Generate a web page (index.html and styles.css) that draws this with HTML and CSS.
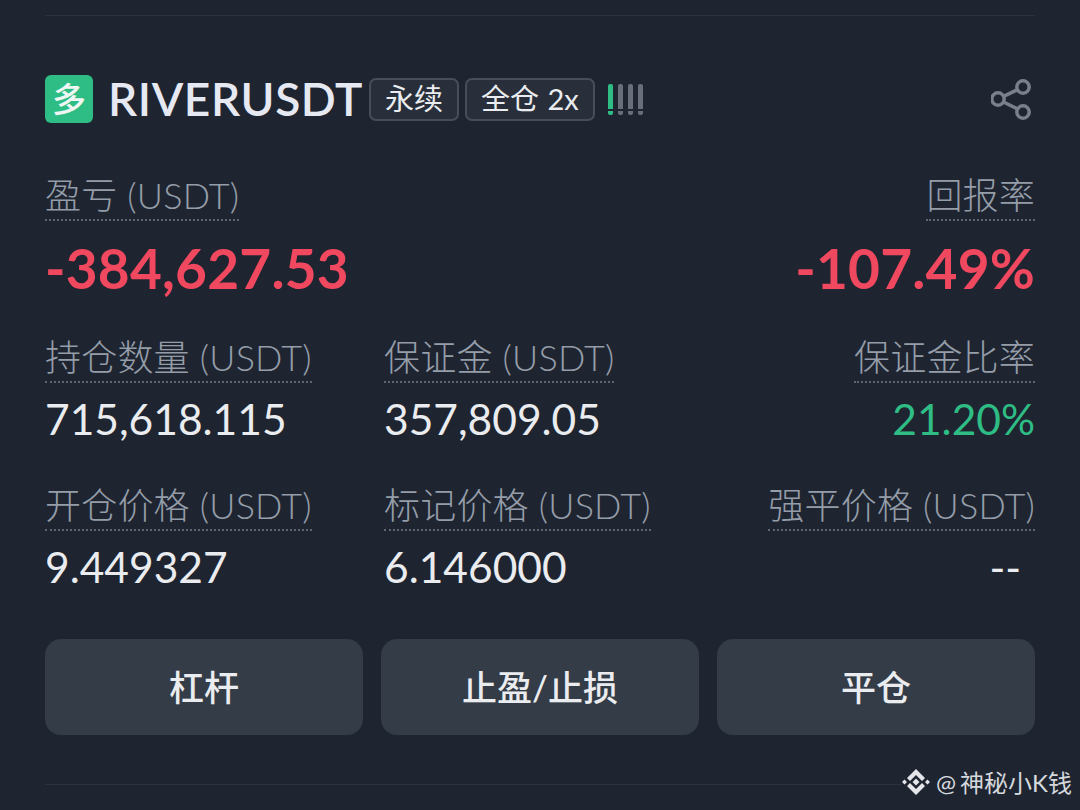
FILE: index.html
```html
<!DOCTYPE html>
<html lang="zh-CN">
<head>
<meta charset="utf-8">
<title>RIVERUSDT</title>
<link rel="stylesheet" href="styles.css">
</head>
<body>
<main class="card">
  <header class="head">
    <span class="side">多</span>
    <span class="symbol">RIVERUSDT</span>
    <span class="tag">永续</span>
    <span class="tag">全仓 2x</span>
    <span class="risk"><i class="on"></i><i></i><i></i><i></i></span>
    <svg class="share" viewBox="0 0 40 44" width="40" height="44" fill="none" stroke="#79808c" stroke-width="3.500">
      <circle cx="7" cy="22" r="6.200"/><circle cx="32" cy="10" r="6.200"/><circle cx="32" cy="35" r="6.200"/>
      <path d="M12.500 19.300 26.500 12.700M12.500 25 26.500 32"/>
    </svg>
  </header>

  <section class="pnl">
    <div class="cell">
      <span class="label">盈亏 (USDT)</span>
      <span class="big red">-384,627.53</span>
    </div>
    <div class="cell end">
      <span class="label">回报率</span>
      <span class="big red">-107.49%</span>
    </div>
  </section>

  <section class="stats">
    <div class="cell"><span class="label">持仓数量 (USDT)</span><span class="val">715,618.115</span></div>
    <div class="cell"><span class="label">保证金 (USDT)</span><span class="val">357,809.05</span></div>
    <div class="cell end"><span class="label">保证金比率</span><span class="val green">21.20%</span></div>
    <div class="cell"><span class="label">开仓价格 (USDT)</span><span class="val">9.449327</span></div>
    <div class="cell"><span class="label">标记价格 (USDT)</span><span class="val">6.146000</span></div>
    <div class="cell end"><span class="label">强平价格 (USDT)</span><span class="val dash">--</span></div>
  </section>

  <nav class="actions">
    <button class="btn">杠杆</button>
    <button class="btn">止盈/止损</button>
    <button class="btn">平仓</button>
  </nav>
</main>
<footer class="mark">
  <svg viewBox="0 0 28 28" width="28" height="28" fill="#e4e6ea">
    <path d="M14 1 23 10 20 13 14 7 8 13 5 10Z"/>
    <path d="M14 27 5 18 8 15 14 21 20 15 23 18Z"/>
    <path d="M0 14 2.500 11.500 5 14 2.500 16.500ZM23 14 25.500 11.500 28 14 25.500 16.500ZM14 10.500 17.500 14 14 17.500 10.500 14Z"/>
  </svg>
  <span class="mark-text">@ 神秘小K钱</span>
</footer>
</body>
</html>
```
FILE: styles.css
```css
* { box-sizing: border-box; }
html, body { margin: 0; height: 810px; overflow: hidden; }
body {
  background: #1e2531;
  color: #eaecef;
  font-family: "Lato", "Noto Sans CJK SC", sans-serif;
  position: relative;
}
.card {
  margin: 15px 45px 0;
  padding-top: 59px;
  height: 770px;
  border-top: 1px solid #2b323d;
  border-bottom: 1px solid #2b323d;
}
.head { display: flex; align-items: center; height: 48px; }
.side {
  width: 48px; height: 48px; border-radius: 6px;
  background: #2ebd85; color: #eef7f3;
  font-size: 34px; font-weight: 500; line-height: 48px; text-align: center;
}
.symbol {
  margin-left: 15px; font-size: 46px; font-weight: 600; line-height: 48px;
  color: #e6e9f2; letter-spacing: 0.6px;
}
.tag {
  height: 43px; margin-left: 6px; padding: 0 14px;
  border: 2px solid #474e5a; border-radius: 7px;
  font-size: 29px; line-height: 37px; background: #282f3b; color: #eaecef;
  white-space: nowrap; word-spacing: 1px;
}
.risk { display: flex; gap: 5px; margin-left: 13px; }
.risk i {
  width: 5px; height: 31px; border-radius: 2px;
  background: linear-gradient(#686e7a 0 25px, transparent 25px 27px, #686e7a 27px);
}
.risk i.on { background: linear-gradient(#2ebd85 0 25px, transparent 25px 27px, #2ebd85 27px); }
.share { margin-left: auto; margin-right: 4px; }
.cell { display: flex; flex-direction: column; align-items: flex-start; }
.cell.end { align-items: flex-end; }
.label {
  font-size: 36px; font-weight: 300; line-height: 40px; height: 46px; color: #959da9;
  border-bottom: 2px dotted #5f6672; white-space: nowrap; letter-spacing: 0.2px;
}
.pnl { display: flex; justify-content: space-between; margin-top: 52px; }
.big { font-size: 55px; font-weight: 700; line-height: 64px; margin-top: 15px; letter-spacing: 0.2px; }
.red { color: #f0485f; }
.green { color: #2ebd85; }
.stats { display: grid; grid-template-columns: 339px 1fr auto; row-gap: 38px; margin-top: 37px; }
.val { font-size: 42.500px; line-height: 56px; margin-top: 8px; }
.dash { padding-right: 14px; }
.actions { display: grid; grid-template-columns: repeat(3, 1fr); gap: 18px; margin-top: 44px; }
.btn {
  height: 96px; border: 0; border-radius: 16px; padding: 0 0 4px; background: #333c47; color: #eaecef;
  font: 500 35px "Lato", "Noto Sans CJK SC", sans-serif;
}
.mark {
  position: absolute; right: 8px; top: 764px; display: flex; align-items: center; gap: 6px;
  font-size: 24px; color: #d5d8dd; background: #1e2531;
}
.mark-text { word-spacing: -2px; }
```
